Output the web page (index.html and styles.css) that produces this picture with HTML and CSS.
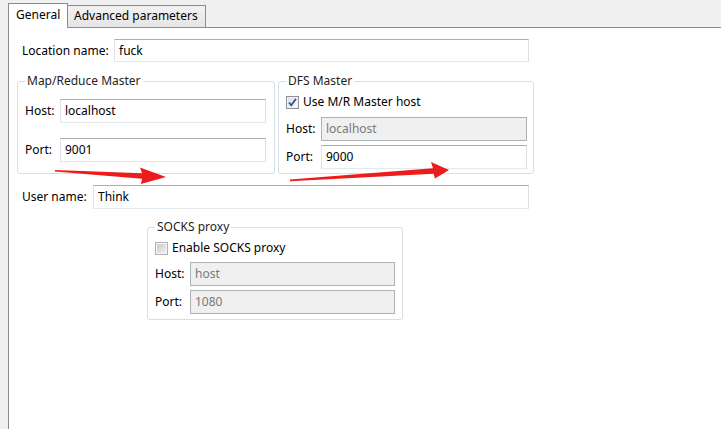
FILE: index.html
```html
<!DOCTYPE html>
<html>
<head>
<meta charset="utf-8">
<link rel="stylesheet" href="styles.css">
</head>
<body>
<div class="window">
  <div class="tabs">
    <div class="tab tab-active">General</div>
    <div class="tab tab-idle">Advanced parameters</div>
  </div>
  <div class="pane">
    <div class="row row-loc">
      <span class="lbl lbl-loc">Location name:</span>
      <span class="field field-loc">fuck</span>
    </div>
    <div class="groups">
      <fieldset class="group group-mr">
        <legend>Map/Reduce Master</legend>
        <div class="group-body body-mr">
          <div class="frow"><span class="lbl lbl-short">Host:</span><span class="field field-grp">localhost</span></div>
          <div class="frow"><span class="lbl lbl-short">Port:</span><span class="field field-grp">9001</span></div>
        </div>
      </fieldset>
      <fieldset class="group group-dfs">
        <legend>DFS Master</legend>
        <div class="group-body body-dfs">
          <div class="check">
            <span class="box box-on"><svg width="13" height="13" viewBox="0 0 13 13"><path d="M3 6.5 L5.3 9.3 L10 2.8" fill="none" stroke="#34509a" stroke-width="1.8"/></svg></span>
            <span>Use M/R Master host</span>
          </div>
          <div class="frow"><span class="lbl lbl-short">Host:</span><span class="field field-grp disabled">localhost</span></div>
          <div class="frow"><span class="lbl lbl-short">Port:</span><span class="field field-grp">9000</span></div>
        </div>
      </fieldset>
    </div>
    <div class="row row-user">
      <span class="lbl lbl-user">User name:</span>
      <span class="field field-user">Think</span>
    </div>
    <fieldset class="group group-socks">
      <legend>SOCKS proxy</legend>
      <div class="group-body body-socks">
        <div class="check">
          <span class="box box-off"></span>
          <span>Enable SOCKS proxy</span>
        </div>
        <div class="frow"><span class="lbl lbl-short">Host:</span><span class="field field-socks disabled">host</span></div>
        <div class="frow"><span class="lbl lbl-short">Port:</span><span class="field field-socks disabled">1080</span></div>
      </div>
    </fieldset>
  </div>
  <svg class="arrows" width="721" height="429" viewBox="0 0 721 429">
    <polygon fill="#ec1c1c" points="55,170 142,173.3 140,167.5 166,177 141,184 142,178.8 55,171.4"/>
    <polygon fill="#ec1c1c" points="290,179.5 433,168.3 431,162 449,170 435,178.5 433.5,173.8 290,181.2"/>
  </svg>
</div>
</body>
</html>
```

FILE: styles.css
```css
* { box-sizing: border-box; }

html, body {
  margin: 0;
  padding: 0;
}

body {
  width: 721px;
  height: 429px;
  overflow: hidden;
  background: #f0f0f0;
  font-family: "Noto Sans", "Liberation Sans", sans-serif;
  font-size: 12px;
  color: #000;
}

.window {
  position: relative;
  width: 721px;
  height: 429px;
  padding: 3px 0 0 8px;
  display: flex;
  flex-direction: column;
}

.tabs {
  display: flex;
  align-items: flex-end;
  height: 24px;
  flex: none;
}

.tab {
  border: 1px solid #898c95;
  border-bottom: none;
  line-height: 16px;
}

.tab-active {
  position: relative;
  z-index: 1;
  width: 60px;
  height: 25px;
  margin-bottom: -1px;
  background: #fff;
  padding: 3px 0 0 7px;
}

.tab-idle {
  width: 139px;
  height: 22px;
  margin-left: -1px;
  background: linear-gradient(#f2f2f2, #e5e5e5);
  padding: 2px 0 0 6px;
}

.pane {
  flex: 1;
  background: #fff;
  border-top: 1px solid #898c95;
  border-left: 1px solid #898c95;
  display: flex;
  flex-direction: column;
  align-items: flex-start;
}

.row {
  display: flex;
  align-items: center;
}

.row-loc {
  margin: 11px 0 0 13px;
}

.row-user {
  margin: 11px 0 0 13px;
}

.lbl {
  flex: none;
  line-height: 16px;
}

.lbl-loc { width: 92px; }
.lbl-user { width: 71px; }
.lbl-short { width: 35px; }

.field {
  display: block;
  flex: none;
  height: 24px;
  line-height: 22px;
  padding-left: 4px;
  border: 1px solid;
  border-color: #abadb3 #dbdfe6 #e3e9ef #e2e3ea;
  background: #fff;
  white-space: nowrap;
}

.field-loc { width: 415px; height: 23px; line-height: 21px; }
.field-user { width: 436px; }
.field-grp { width: 206px; }
.field-socks { width: 205px; }

.field.disabled {
  background: #f0f0f0;
  color: #7a7a7a;
  border-color: #adb2b5;
}

.groups {
  display: flex;
  margin: 11px 0 0 8px;
}

.group {
  margin: 0;
  padding: 0 6px 0 7px;
  border: 1px solid #d5dfe5;
  border-radius: 3px;
  min-width: 0;
}

.group legend {
  padding: 0 2px;
  margin-left: 0;
  line-height: 16px;
  color: #1e1e1e;
}

.group-mr {
  width: 258px;
  padding-right: 8px;
}

.group-dfs {
  width: 256px;
  margin-left: 3px;
}

.group-socks {
  width: 256px;
  margin: 10px 0 0 138px;
}

.group-body {
  display: flex;
  flex-direction: column;
}

.body-mr {
  padding: 10px 0 11px;
  gap: 15px;
}

.body-dfs {
  padding: 5px 0 4px;
  gap: 4px;
}

.body-dfs .check { margin-bottom: 3px; }

.body-socks {
  padding: 5px 0 5px;
  gap: 4px;
}

.body-socks .check { margin-bottom: 2px; }

.frow {
  display: flex;
  align-items: center;
}

.check {
  display: flex;
  align-items: center;
  height: 16px;
  line-height: 16px;
}

.box {
  width: 13px;
  height: 13px;
  margin-right: 4px;
  flex: none;
  border: 1px solid #8e8f8f;
  display: block;
  position: relative;
}

.box svg {
  position: absolute;
  left: -1px;
  top: -1px;
}

.box-on {
  background: linear-gradient(135deg, #d6dbe6, #ffffff);
  box-shadow: inset 0 0 0 1px #f4f4f4;
}

.box-off {
  border-color: #b1b1b1;
  background: linear-gradient(135deg, #c8c8c8, #f4f4f4);
  box-shadow: inset 0 0 0 1px #f7f7f7;
}

.arrows {
  position: absolute;
  left: 0;
  top: 0;
  pointer-events: none;
}
```
